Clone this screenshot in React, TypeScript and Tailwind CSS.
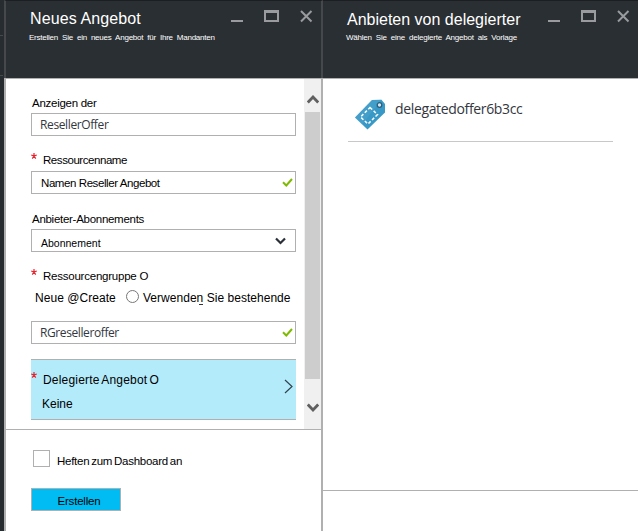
import type { ReactNode } from 'react';

const sans = 'font-["Liberation_Sans",Arial,sans-serif]';
const segoe = 'font-["Open_Sans","Noto_Sans",sans-serif]';

function WindowButtons() {
  return (
    <svg width="84" height="16" viewBox="0 0 84 16" className="shrink-0" fill="none" stroke="#999b9e">
      <path d="M1 12H13" strokeWidth="2" />
      <path d="M34 2.500H49" strokeWidth="3" />
      <path d="M35 3V12H48V3" strokeWidth="2" />
      <path d="M71 2L81.500 12.500M81.500 2L71 12.500" strokeWidth="2" />
    </svg>
  );
}

function Check() {
  return (
    <svg width="11" height="9" viewBox="0 0 11 9" fill="none" stroke="#7fba00" strokeWidth="2">
      <path d="M1 4.300L4.300 7.500L10 1" />
    </svg>
  );
}

function Field({ children, icon }: { children: ReactNode; icon?: ReactNode }) {
  return (
    <div className="flex h-[23px] w-[265px] shrink-0 items-center justify-between border border-[#b0b0b0] bg-white pr-[2px] pl-2">
      {children}
      {icon}
    </div>
  );
}

function Star() {
  return (
    <svg width="6" height="6" viewBox="0 0 6 6" className="shrink-0" stroke="#e8222c" strokeWidth="1.200">
      <path d="M3 0V3M3 3L0.200 2M3 3L5.800 2M3 3L1.300 5.600M3 3L4.700 5.600" />
    </svg>
  );
}

function TagIcon() {
  return (
    <svg width="32" height="32" viewBox="0 0 32 32" className="shrink-0">
      <path d="M18 1L27.500 0.700L31 5V13.500L13.500 30.500L1 18.500Z" fill="#3999c6" />
      <path d="M1 18.500L18 1L27.500 0.700L8 25.500Z" fill="#56a9cf" opacity=".35" />
      <circle cx="25.500" cy="6" r="2.300" fill="#d7e5ec" stroke="#28607d" strokeWidth="1.300" />
      <path d="M16 8.500L23.500 15.500L14 25L6.500 18Z" fill="none" stroke="#fff" strokeWidth="1.500" strokeDasharray="3 2" />
    </svg>
  );
}

export default function App() {
  return (
    <div className={`flex h-[531px] w-[638px] overflow-hidden bg-white text-black ${sans}`}>
      <aside className="flex w-1 shrink-0 flex-col bg-[#272c30]">
        <div className="h-9 w-[3px] border-b border-[#45494c]" />
        <div className="h-10 w-[3px] border-b border-[#45494c]" />
      </aside>

      <section className="flex w-[319px] shrink-0 flex-col">
        <header className="flex h-[78px] shrink-0 justify-between border-x-2 border-t border-x-[#45494c] border-t-[#1b1f22] bg-[#2a2f33] pr-[7px] pl-[23px] text-white">
          <div className="flex flex-col pt-[7px] whitespace-nowrap">
            <h1 className="h-[23px] pl-px text-[16px] leading-[22px] tracking-[0.1px]">Neues Angebot</h1>
            <p className="h-[14px] text-[8px] leading-[14px] tracking-[-0.23px] [word-spacing:2px]">Erstellen Sie ein neues Angebot für Ihre Mandanten</p>
          </div>
          <div className="pt-2"><WindowButtons /></div>
        </header>

        <div className="flex min-h-0 flex-1 flex-col border-x-2 border-t border-[#b0b0b0] whitespace-nowrap">
          <div className="flex h-[350px] shrink-0 justify-between">
            <div className="flex flex-col pl-[25px] text-[12px]">
              <div className="mt-[17px] h-[17px] pl-px text-[11.5px] leading-[14px] tracking-[-0.27px]">Anzeigen der</div>
              <Field><span className={`text-[12px] tracking-[-0.38px] text-[#333740] ${segoe}`}>ResellerOffer</span></Field>
              <div className="mt-[17px] flex h-[18px] leading-[14px]">
                <div className="w-3"><Star /></div>
                <span className="text-[11.5px] tracking-[-0.44px]">Ressourcenname</span>
              </div>
              <Field icon={<Check />}><span className="pt-[2px] pl-px text-[11.5px] tracking-[-0.42px]">Namen Reseller Angebot</span></Field>
              <div className="mt-[18px] h-[17px] pl-px text-[11.5px] leading-[14px] tracking-[-0.28px]">Anbieter-Abonnements</div>
              <Field
                icon={
                  <svg width="11" height="8" viewBox="0 0 11 8" className="mr-[7px]" fill="none" stroke="#293039" strokeWidth="2.200">
                    <path d="M1 1.500L5.500 6L10 1.500" />
                  </svg>
                }
              >
                <span className="pt-1 pl-px text-[10.5px] leading-[14px]">Abonnement</span>
              </Field>
              <div className="mt-[16px] flex h-[21px] pt-px leading-[14px]">
                <div className="w-3"><Star /></div>
                <span className="text-[11.5px] tracking-[-0.23px]">Ressourcengruppe O</span>
              </div>
              <div className="flex h-8 pt-[2px] pl-1 leading-[14px]">
                <span className="w-[91px] tracking-[0.05px]">Neue @Create</span>
                <span className="-mt-px mr-[4px] h-[13px] w-[13px] rounded-full border border-[#777]" />
                <span className="relative tracking-[0.03px]">
                  Verwenden Sie bestehende
                  <i className="absolute top-[13px] left-[56px] h-px w-1 bg-[#30343a]" />
                </span>
              </div>
              <Field icon={<Check />}><span className={`text-[12px] tracking-[-0.4px] text-[#333740] ${segoe}`}>RGreselleroffer</span></Field>
              <div className="mt-[15px] flex h-[61px] w-[265px] border-y border-[#b0b0b0] bg-[#b3ebfb]">
                <div className="w-3 pt-3"><Star /></div>
                <div className="flex flex-1 flex-col pt-[13px] leading-[14px]">
                  <span className="h-6 tracking-[0.2px] [word-spacing:-1.300px]">Delegierte Angebot O</span>
                  <span className="-ml-px">Keine</span>
                </div>
                <svg width="9" height="15" viewBox="0 0 9 15" className="mt-[19px] mr-[3px]" fill="none" stroke="#30444e" strokeWidth="1.200">
                  <path d="M1 1L8 7.500L1 14" />
                </svg>
              </div>
            </div>
            <div className="flex w-[17px] flex-col bg-[#f0f0f0]">
              <div className="flex h-[33px] items-end justify-center pb-2">
                <svg width="12" height="9" viewBox="0 0 12 9" fill="none" stroke="#606060" strokeWidth="2.800"><path d="M.8 7.500L6 2L11.200 7.500" /></svg>
              </div>
              <div className="ml-px h-[267px] w-[15px] bg-[#cdcdcd]" />
              <div className="flex flex-1 justify-center pt-6">
                <svg width="12" height="9" viewBox="0 0 12 9" fill="none" stroke="#606060" strokeWidth="2.800"><path d="M.8 1.500L6 7L11.200 1.500" /></svg>
              </div>
            </div>
          </div>
          <footer className="flex flex-1 flex-col border-t border-[#b0b0b0] pl-[25px] text-[11.5px]">
            <div className="flex h-[58px] pt-5 pl-[2px]">
              <span className="h-[17px] w-[17px] border border-[#b0b0b0]" />
              <span className="mt-1 ml-[7px] leading-[14px] tracking-[-0.27px] [word-spacing:-1px]">Heften zum Dashboard an</span>
            </div>
            <button className="h-[23px] w-[90px] border border-[#b0b0b0] bg-[#00bcf2] pt-[2px] pl-[6px] leading-[14px] tracking-[-0.2px]">Erstellen</button>
          </footer>
        </div>
      </section>

      <section className="flex flex-1 flex-col whitespace-nowrap">
        <header className="flex h-[78px] shrink-0 justify-between border-t border-[#1b1f22] bg-[#2a2f33] pr-[7px] pl-[23px] text-white">
          <div className="flex flex-col pt-2">
            <h1 className="h-[22px] pl-px text-[16px] leading-[22px]">Anbieten von delegierter</h1>
            <p className="h-[14px] text-[8px] leading-[14px] tracking-[-0.22px] [word-spacing:2px]">Wählen Sie eine delegierte Angebot als Vorlage</p>
          </div>
          <div className="pt-2"><WindowButtons /></div>
        </header>
        <div className="flex h-[412px] shrink-0 flex-col border-t border-[#b0b0b0] pl-[25px]">
          <div className="flex h-[63px] w-[265px] border-b border-[#c8c8c8] pt-5 pl-[6px]">
            <TagIcon />
            <span className={`ml-[9px] text-[14px] leading-5 tracking-[-0.35px] text-[#333740] ${segoe}`}>delegatedoffer6b3cc</span>
          </div>
        </div>
        <footer className="flex-1 border-t border-[#b0b0b0]" />
      </section>
    </div>
  );
}
